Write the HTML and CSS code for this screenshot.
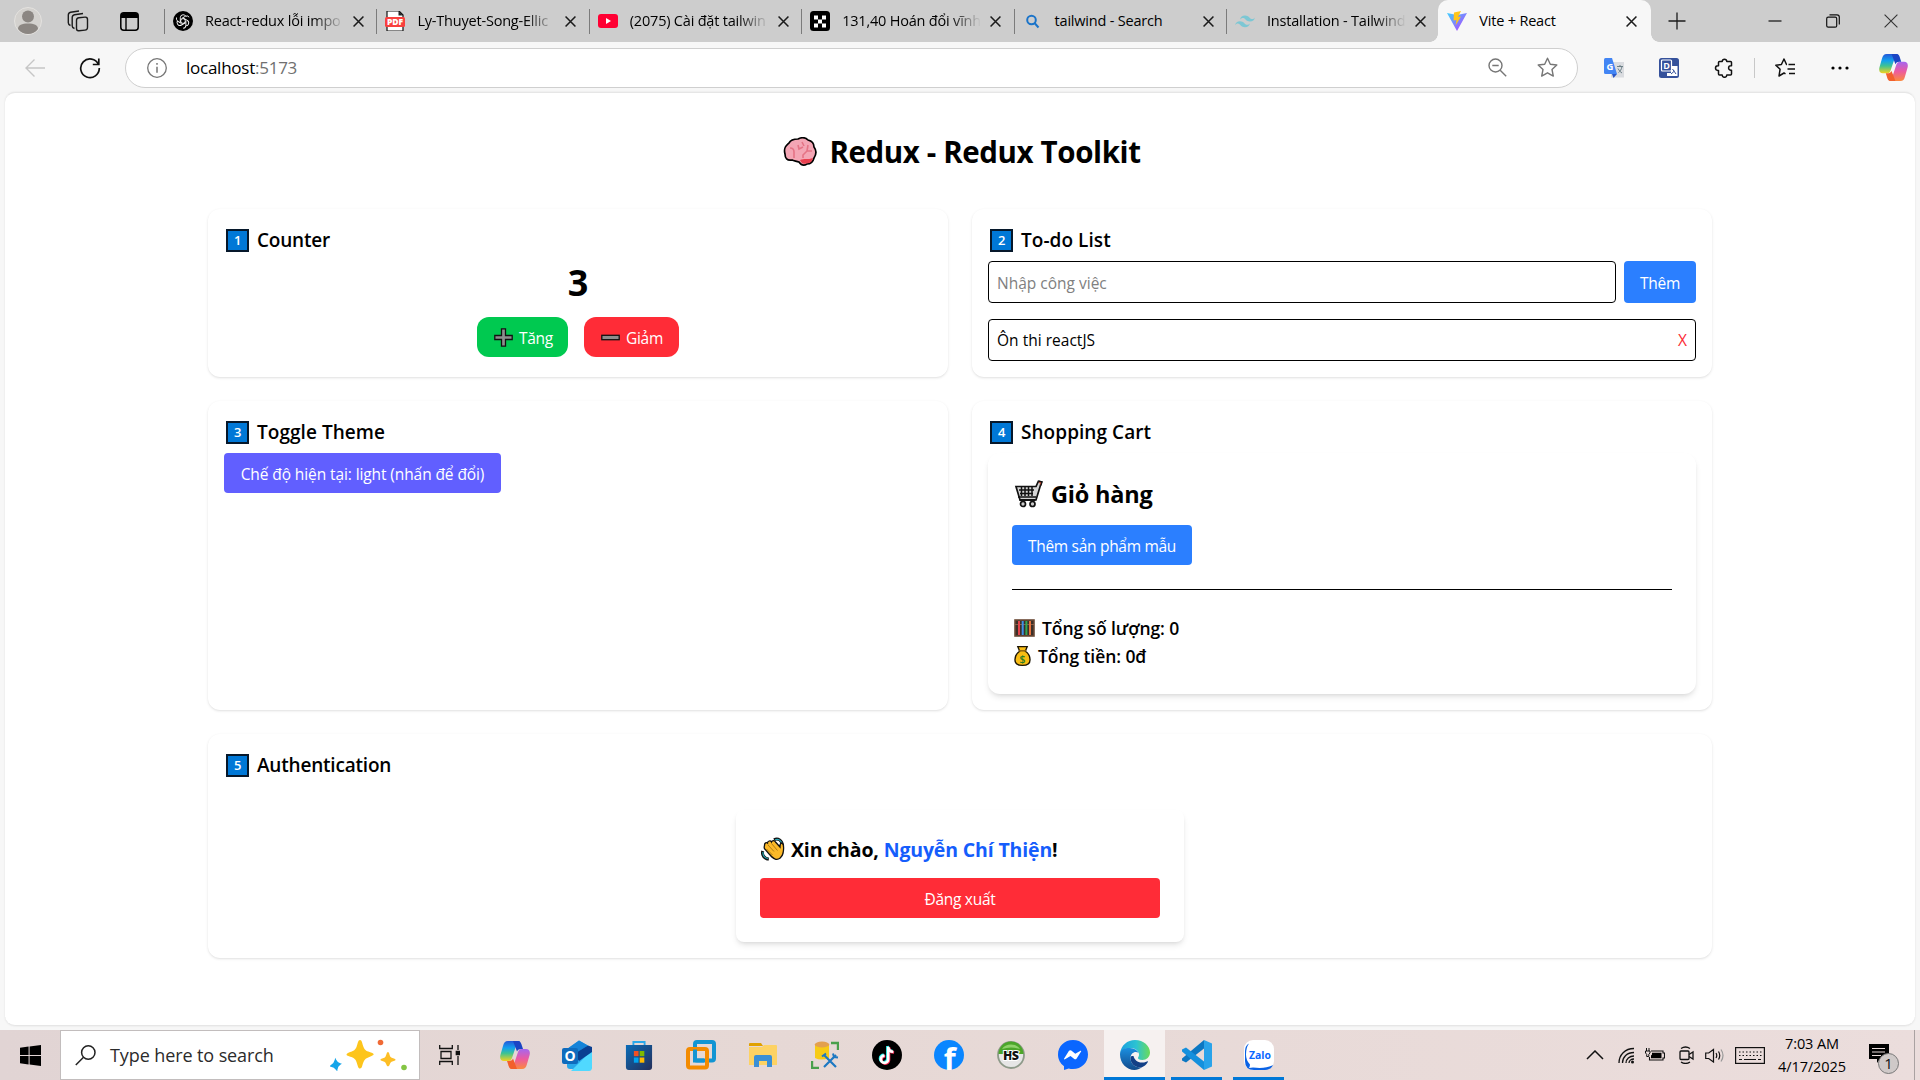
FILE: index.html
```html
<!DOCTYPE html>
<html lang="vi">
<head>
<meta charset="utf-8">
<title>Vite + React</title>
<link rel="stylesheet" href="styles.css">
</head>
<body>
<svg width="0" height="0" class="defs">
  <defs>
    <linearGradient id="cpA" x1="0" y1="0" x2="0" y2="1"><stop offset="0" stop-color="#2458d8"/><stop offset=".35" stop-color="#12a1ee"/><stop offset=".62" stop-color="#3fc391"/><stop offset="1" stop-color="#f4d21d"/></linearGradient>
    <linearGradient id="cpB" x1="0" y1="0" x2="0" y2="1"><stop offset="0" stop-color="#a566f0"/><stop offset=".5" stop-color="#ec5aa0"/><stop offset="1" stop-color="#fb8a3d"/></linearGradient>
    <linearGradient id="viteA" x1="0" y1="0" x2="1" y2="1"><stop offset="0" stop-color="#41d1ff"/><stop offset="1" stop-color="#bd34fe"/></linearGradient>
    <linearGradient id="edgeA" x1="0" y1="0" x2="1" y2="0"><stop offset="0" stop-color="#1a9fe0"/><stop offset=".55" stop-color="#2cc3d2"/><stop offset="1" stop-color="#6cdb58"/></linearGradient>
    <linearGradient id="edgeB" x1="0" y1="0" x2="0" y2="1"><stop offset="0" stop-color="#1b8fe0"/><stop offset="1" stop-color="#114a8b"/></linearGradient>
    <linearGradient id="storeA" x1="0" y1="0" x2="1" y2="1"><stop offset="0" stop-color="#0a6cb8"/><stop offset="1" stop-color="#252e58"/></linearGradient>
    <symbol id="close" viewBox="0 0 10 10"><path d="M.5.5l9 9M9.500.5l-9 9" stroke="#1b1b1b" stroke-width="1.400" fill="none"/></symbol>
    <symbol id="copilot" viewBox="0 0 30 28">
      <path d="M8 0h12l-3 2-5 15c-.7 2-1.700 3-4 3H4c-3 0-4.500-2-3.600-6L3 5c.9-3.400 2-5 5-5z" fill="url(#cpA)"/>
      <path d="M22 28H10l3-2 5-15c.7-2 1.700-3 4-3h4c3 0 4.500 2 3.600 6L27 23c-.9 3.400-2 5-5 5z" fill="url(#cpB)"/>
      <path d="M13 0h5c2.500 0 3.200 2 4 5l1 3h-2c-2 0-3 .7-4 2.500z" fill="#1b45c4"/>
      <path d="M17 28h-5c-2.500 0-3.200-2-4-5l-1-3h2c2 0 3-.7 4-2.500z" fill="#f2602c"/>
    </symbol>
  </defs>
</svg>

<header class="tabstrip">
  <div class="lead">
    <svg class="avatar" width="28" height="28" viewBox="0 0 28 28"><circle cx="14" cy="14" r="13.500" fill="#d3d1ce" stroke="#e4e2df"/><circle cx="14" cy="9.500" r="6" fill="#8b8682"/><path d="M4 22c0-4 4-5.500 10-5.500S24 18 24 22c-2.500 3.500-6 5-10 5S6.500 25.500 4 22z" fill="#8b8682"/></svg>
    <svg class="workspaces" width="22" height="22" viewBox="0 0 22 22" fill="none" stroke="#1b1b1b" stroke-width="1.400"><rect x="9.500" y="7" width="11" height="13" rx="2.500" transform="skewY(-6) translate(0 2)"/><path d="M7.500 18.500C5.800 18 5.200 17.300 5.200 16V7.500c0-1.500.8-2.500 2.300-2.800L16 3.500M3.500 15.500C2 15 1.300 14 1.300 12.800V5c0-1.500.8-2.500 2.300-2.800L12 1"/></svg>
    <svg class="vtabs" width="19" height="19" viewBox="0 0 19 19"><rect x=".8" y=".8" width="17.400" height="17.400" rx="3" fill="none" stroke="#000" stroke-width="1.500"/><path d="M1 6V3.500Q1 1 3.500 1h12Q18 1 18 3.500V6z"/><path d="M6 6v12" stroke="#000" stroke-width="1.400"/></svg>
  </div>
  <nav class="tabs">
    <div class="tab"><svg class="fav" viewBox="0 0 20 20"><circle cx="10" cy="10" r="10"/><g fill="none" stroke="#fff" stroke-width=".9"><path id="petal" d="M7.300 11.500V6.700q0-2.700 2.700-3 2.200 0 3 1.700M8.500 7.500l4-2.300q2.500-.9 3.700 1"/><use href="#petal" transform="rotate(120 10 10)"/><use href="#petal" transform="rotate(240 10 10)"/><path d="M10 7.500l2.200 1.200v2.600L10 12.500l-2.200-1.200V8.700z"/></g></svg><span class="label fade">React-redux lỗi impo</span><svg class="x"><use href="#close"/></svg></div>
    <div class="tab"><svg class="fav" viewBox="0 0 20 20"><path d="M2 0h12l4 4v16H2z" fill="#fff" stroke="#111" stroke-width="1.200"/><path d="M13.500 0v4.500H18" fill="#222"/><rect y="6" width="20" height="10" rx="1.500" fill="#f9403d"/><text x="10" y="14.300" font-size="8.500" font-weight="800" fill="#fff" text-anchor="middle" textLength="16">PDF</text></svg><span class="label fade">Ly-Thuyet-Song-Ellic</span><svg class="x"><use href="#close"/></svg></div>
    <div class="tab"><svg class="fav" viewBox="0 0 20 20"><rect y="3" width="20" height="14" rx="3" fill="#ff0033"/><path d="M8 7l5 3-5 3z" fill="#fff"/></svg><span class="label fade">(2075) Cài đặt tailwin</span><svg class="x"><use href="#close"/></svg></div>
    <div class="tab"><svg class="fav" viewBox="0 0 20 20"><rect width="20" height="20" rx="3.500"/><path d="M4 4.500h4v4H4zM12 4.500h4v4h-4zM8 8.500h4v4H8zM4 12.500h4v4H4zM12 12.500h4v4h-4z" fill="#fff"/></svg><span class="label fade">131,40 Hoán đổi vĩnh</span><svg class="x"><use href="#close"/></svg></div>
    <div class="tab"><svg class="fav" viewBox="0 0 20 20" fill="none" stroke="#1b74c9" stroke-width="2"><circle cx="8.500" cy="9" r="4.300"/><path d="M11.500 12l4 4.500"/></svg><span class="label">tailwind - Search</span><svg class="x"><use href="#close"/></svg></div>
    <div class="tab"><svg class="fav" viewBox="0 0 20 20"><path d="M5 8.500C5.700 5.800 7.300 4.500 10 4.500c4 0 4.500 3 6.500 3.500 1.300.3 2.500-.2 3.500-1.500-.7 2.700-2.300 4-5 4-4 0-4.500-3-6.500-3.500C7.200 6.700 6 7.200 5 8.500zM0 14.200c.7-2.700 2.300-4 5-4 4 0 4.500 3 6.500 3.500 1.300.3 2.500-.2 3.500-1.500-.7 2.700-2.300 4-5 4-4 0-4.500-3-6.500-3.500-1.300-.3-2.500.2-3.500 1.500z" fill="#7cc7d4"/></svg><span class="label fade">Installation - Tailwind</span><svg class="x"><use href="#close"/></svg></div>
    <div class="tab active"><svg class="fav" viewBox="0 0 20 20"><path d="M0 2l10 2 10-2-10 18z" fill="url(#viteA)"/><path d="M7 1.500l7-1.500-3 6 3-.5-5.500 9 1-5.500L6.500 9.500z" fill="#ffc61c"/></svg><span class="label">Vite + React</span><svg class="x"><use href="#close"/></svg></div>
  </nav>
  <svg class="newtab" width="18" height="18" viewBox="0 0 18 18"><path d="M9 .5v17M.5 9h17" stroke="#1b1b1b" stroke-width="1.300"/></svg>
  <div class="winctl">
    <svg width="14" height="14" viewBox="0 0 14 14"><path d="M.5 7h13" stroke="#111" stroke-width="1.200"/></svg>
    <svg width="14" height="14" viewBox="0 0 14 14" fill="none" stroke="#111" stroke-width="1.200"><rect x=".7" y="3.200" width="10" height="10" rx="1.500"/><path d="M3.500.8H11q2.300 0 2.300 2.300V10.500"/></svg>
    <svg width="14" height="14" viewBox="0 0 14 14"><path d="M.6.6l12.800 12.800M13.400.6L.6 13.400" stroke="#333" stroke-width="1.100"/></svg>
  </div>
</header>

<div class="toolbar">
  <svg class="back" width="20" height="18" viewBox="0 0 20 18" fill="none" stroke="#c6c6c6" stroke-width="1.400"><path d="M20 9H1M9.500.5L1 9l8.500 8.500"/></svg>
  <svg class="reload" width="22" height="22" viewBox="0 0 22 22" fill="none" stroke="#111" stroke-width="1.700"><path d="M19.500 7.500A9.300 9.300 0 1 0 20.300 11M19.800 1.500v6h-6"/></svg>
  <div class="omnibox">
    <svg width="20" height="20" viewBox="0 0 20 20" fill="none" stroke="#767676" stroke-width="1.300"><circle cx="10" cy="10" r="9.300"/><path d="M10 8.800v6M10 5v1.700" stroke-width="1.500"/></svg>
    <span class="url">localhost<i>:5173</i></span>
    <svg class="zoomout" width="19" height="19" viewBox="0 0 19 19" fill="none" stroke="#767676" stroke-width="1.400"><circle cx="7.500" cy="7.500" r="6.500"/><path d="M12.200 12.200l6 6M4.300 7.500h6.400"/></svg>
    <svg class="fave" width="21" height="21" viewBox="0 0 21 21" fill="none" stroke="#767676" stroke-width="1.400" stroke-linejoin="round"><path d="M10.500 1.200l2.800 6 6.500.8-4.800 4.500 1.300 6.600-5.800-3.300-5.800 3.300L6 12.500 1.200 8l6.500-.8z"/></svg>
  </div>
  <svg class="gtr" width="20" height="20" viewBox="0 0 20 20"><rect x="7" y="4" width="13" height="15.500" fill="#dadce0"/><path d="M0 1.500Q0 0 1.500 0H8l5 16H1.500Q0 16 0 14.500z" fill="#4285f4"/><path d="M8 16h5l-3.500 4z" fill="#2a56c6"/><path d="M13 8.500h6M16 7v1.500M18 8.500c-.5 3-2 5-3.500 6M14 10.500c1 2 2.500 3.500 4 4.500" stroke="#6b7f86" fill="none"/><text x="6" y="11.500" font-size="9.500" font-weight="700" fill="#fff" text-anchor="middle">G</text></svg>
  <svg class="dtr" width="20" height="20" viewBox="0 0 20 20"><rect width="20" height="20" rx="2.500" fill="#35519b"/><rect x="2.500" y="2" width="10" height="11" rx="1" fill="none" stroke="#fff" stroke-width="1.200"/><text x="7.500" y="11" font-size="9" font-weight="700" fill="#fff" text-anchor="middle">D</text><path d="M12 8h6.500v10H8v-3h4z" fill="#fff"/><path d="M13.500 11l3.500 5M12 16l3.500-3" stroke="#35519b"/></svg>
  <svg class="ext" width="20" height="20" viewBox="0 0 20 20" fill="none" stroke="#111" stroke-width="1.500" stroke-linejoin="round"><path d="M5.500 3.500h2.700a2.300 2.300 0 0 1 4.600 0H16.500q1 0 1 1v3.300h-.7a2.200 2.200 0 0 0 0 4.400h.7V16q0 1-1 1h-3.700a2.300 2.300 0 0 1-4.600 0H5.500q-1 0-1-1v-3.600h-.7a2.300 2.300 0 0 1 0-4.600h.7V4.500q0-1 1-1z"/></svg>
  <span class="vline"></span>
  <svg class="favs" width="21" height="20" viewBox="0 0 21 20" fill="none" stroke="#111" stroke-width="1.500" stroke-linejoin="round"><path d="M12 6.500h-.5L9 1 6.400 6.500.8 7.200l4.300 4L4 18l5-3 1.500.8M13.500 6.500H20M12.500 11H20M14 15.500h6"/></svg>
  <svg class="more" width="18" height="4" viewBox="0 0 18 4"><circle cx="2" cy="2" r="1.600"/><circle cx="9" cy="2" r="1.600"/><circle cx="16" cy="2" r="1.600"/></svg>
  <svg class="cop" width="29" height="27"><use href="#copilot"/></svg>
</div>

<main class="viewport">
  <h1 class="title"><svg width="34" height="30" viewBox="0 0 34 30"><path d="M2 17C0 10 4 8 6 6c2-4 7-4 9-4 4-2 8-1 10 1 4 1 6 4 6 7 3 4 2 8 0 11-1 4-3 6-7 6-3 2-6 1-8-2-3-1-5-1-7-2-5 1-7-2-7-6z" fill="#f4a6b5" stroke="#000" stroke-width="1.700"/><path d="M17 23c4-2 8 0 13-2-1 4-3 5.500-6.500 5.200-3 1.300-5 .3-6.500-3.200z" fill="#e8404f"/><path d="M7 11c2 0 4 1 4 4M11 15v6M15 8l1 4 4-2M19 5l2 4M25 8l-1 6h5M24 14l-4 4v3" fill="none" stroke="#e57486" stroke-width="1.600"/></svg><span>Redux - Redux Toolkit</span></h1>

  <div class="grid">
    <section class="card">
      <h2><b class="key">1</b><span>Counter</span></h2>
      <p class="count">3</p>
      <div class="row">
        <button class="btn green"><svg width="19" height="19" viewBox="0 0 19 19"><path d="M7.500.8h4v6.700h6.700v4h-6.700v6.700h-4v-6.700H.8v-4h6.700z" fill="#8d8d8d" stroke="#111" stroke-width="1.300"/></svg><span>Tăng</span></button>
        <button class="btn red"><svg width="19" height="19" viewBox="0 0 19 19"><rect x=".8" y="7.300" width="17.400" height="4.400" fill="#8d8d8d" stroke="#111" stroke-width="1.300"/></svg><span>Giảm</span></button>
      </div>
    </section>

    <section class="card">
      <h2><b class="key">2</b><span class="loose">To-do List</span></h2>
      <div class="form"><input class="field" type="text" placeholder="Nhập công việc"><button class="btn blue">Thêm</button></div>
      <div class="item"><span>Ôn thi reactJS</span><span class="del">X</span></div>
    </section>

    <section class="card">
      <h2><b class="key">3</b><span class="loose">Toggle Theme</span></h2>
      <button class="btn indigo">Chế độ hiện tại: light (nhấn để đổi)</button>
    </section>

    <section class="card">
      <h2><b class="key">4</b><span class="loose">Shopping Cart</span></h2>
      <div class="cart">
        <h3><svg width="29" height="28" viewBox="0 0 29 28" stroke="#111" fill="none"><path d="M2 6.500h20l2.300-5 3.200.5-5.500 18H6z" fill="#d5d5d5" stroke-width="1.700"/><path d="M24.300 1l3.700 1-1.200 3.500" fill="#e8583b" stroke-width="1.400"/><path d="M5 10h15M6 13.500h13M7.500 7v9M11 7v9M14.500 7v9M18 7v9M4 17h18" stroke-width="1.500"/><path d="M5.500 20h16" stroke-width="2"/><circle cx="9" cy="24" r="2.500" fill="#ccc" stroke-width="1.700"/><circle cx="18.500" cy="24" r="2.500" fill="#ccc" stroke-width="1.700"/></svg><span>Giỏ hàng</span></h3>
        <button class="btn blue">Thêm sản phẩm mẫu</button>
        <hr>
        <p class="sum"><svg width="21" height="18" viewBox="0 0 21 18"><rect x="1" y="1" width="19" height="16" fill="#3b3029" stroke="#6b4a36" stroke-width="1.600"/><path d="M1 5.500h19" stroke="#8a6048"/><path d="M5 2v14" stroke="#e3434a" stroke-width="2"/><path d="M8.700 2v14" stroke="#3f90e8" stroke-width="2"/><path d="M12.400 2v14" stroke="#33a852" stroke-width="2"/><path d="M16 2v14" stroke="#e8703b" stroke-width="2"/></svg><span>Tổng số lượng: 0</span></p>
        <p class="sum money"><svg width="17" height="22" viewBox="0 0 18 22"><path d="M4 1h10l-2 5c3 2 5 5 5 9 0 4-3 6-8 6s-8-2-8-6c0-4 2-7 5-9z" fill="#f9bd14" stroke="#1c1503" stroke-width="1.400"/><path d="M5 5.500h8" stroke="#8e6410" stroke-width="1.600"/><text x="9" y="18" font-size="11" fill="#2b7d24" font-weight="600" text-anchor="middle">$</text></svg><span>Tổng tiền: 0đ</span></p>
      </div>
    </section>

    <section class="card wide">
      <h2><b class="key">5</b><span>Authentication</span></h2>
      <div class="auth">
        <h4><svg width="24" height="24" viewBox="0 0 24 24"><path d="M13 2.800c4-2.300 8 .5 8.700 6M1.800 14c-1.300 4 1.700 8 6 8" fill="none" stroke="#111" stroke-width="3"/><path d="M14 2.800c3.500-1.500 6.500.7 7.300 5M2 15c-.5 3.500 1.700 6 5 6.500" fill="none" stroke="#27a6b3" stroke-width="1.200"/><path d="M3.500 8c0-2 2-3 3-2 0-2 3-3 4-1 1-2 3-1.500 4 0l4.500 5c0-2 0-4 1.800-4 2 1 2 6 1.300 10-1 4.500-4.300 6.800-7.300 6.300-3-.5-5-3-11-10.300-1.500-2 0-3-.3-4z" fill="#fcb928" stroke="#111" stroke-width="1.300"/><path d="M7 8l6 6.500M10.500 6.500l6 7M5.500 12l6 6" stroke="#8c6111" stroke-width=".7"/></svg><span class="hello">Xin chào, <em>Nguyễn Chí Thiện</em>!</span></h4>
        <button class="btn red">Đăng xuất</button>
      </div>
    </section>
  </div>
</main>

<footer class="taskbar">
  <div class="start"><svg width="21" height="21" viewBox="0 0 21 21"><path d="M0 2.800l8.600-1.200v8.500H0zM9.600 1.400L21 0v10.100H9.600zM0 11.100h8.600v8.400L0 18.300zM9.600 11.100H21V21L9.600 19.600z"/></svg></div>
  <div class="search">
    <svg width="21" height="21" viewBox="0 0 21 21" fill="none" stroke="#222" stroke-width="1.500"><circle cx="13.300" cy="7.500" r="6.700"/><path d="M8.500 12.300L.8 20"/></svg>
    <span>Type here to search</span>
    <svg class="sparks" width="78" height="32" viewBox="0 0 78 32"><path d="M30 1c2 0 2 3 3.500 7S37 12 41 13.500s3 2.500 0 3.800-6 2-7.500 5.700S32 29.500 30 29.500s-2-2.500-3.500-6.500-4-4.500-7.500-5.700-3-2.500 0-3.800 6-1.500 7.500-5.500S28 1 30 1z" fill="#fdc51c"/><path d="M58 13c1.500 0 1.300 4 3 5.300s4.500 1 4.500 2.500-3 1-4.500 2.500-1.300 4-3 4-1.500-2.700-3-4-4.500-1-4.500-2.500 3-1 4.500-2.500 1.500-5.300 3-5.300z" fill="#fdbe25"/><path d="M5.500 21c1 2 1.500 3 4.500 4-2.500 1.300-3 2.300-3.300 5.500-1.500-2-2.400-3-5.700-3.500C4 25.300 4.800 24.300 5.500 21z" fill="#14a5e9" stroke="#14a5e9" stroke-width="1.500"/><circle cx="50.500" cy="3.500" r="2.800" fill="#f06a35"/><circle cx="74" cy="28.500" r="2.800" fill="#84c544"/></svg>
  </div>
  <div class="apps">
    <div class="app view"><svg width="21" height="20" viewBox="0 0 21 20" fill="none" stroke="#111" stroke-width="1.300"><path d="M.7 0v3.500h12.600V0M.7 20v-3.500h12.600V20M2 6.500h10v7H2zM19 0v5M19 11v9"/><path d="M17.300 6.500h3.400v3h-3.400z" fill="#111"/></svg></div>
    <div class="app"><svg width="30" height="28"><use href="#copilot"/></svg></div>
    <div class="app"><svg width="30" height="31" viewBox="0 -2 30 31"><path d="M5 7L17-1.500 30 6v19q0 2-2 2H8q-3 0-3-3z" fill="#28a8ea"/><path d="M5 7L17-1.500l9 5L12 12z" fill="#1583d8"/><path d="M30 8v17q0 4-3 4H9z" fill="#50d9ff"/><path d="M30 5v5l-13 9-5-7L26 3.500z" fill="#0a3f91"/><rect y="6" width="16" height="16" rx="2" fill="#0f6cbd"/><text x="8" y="19" font-size="14" font-weight="700" fill="#fff" text-anchor="middle">O</text></svg></div>
    <div class="app"><svg width="28" height="30" viewBox="0 0 30 30" preserveAspectRatio="none"><path d="M9 6V2h12v4" fill="none" stroke="#29a8ea" stroke-width="2"/><path d="M1 5h28v22q0 3-3 3H4q-3 0-3-3z" fill="url(#storeA)"/><path d="M9.500 11h5v5.200h-5z" fill="#f25022"/><path d="M15.700 11h5v5.200h-5z" fill="#7fba00"/><path d="M9.500 17.500h5v5.200h-5z" fill="#00a4ef"/><path d="M15.700 17.500h5v5.200h-5z" fill="#ffb900"/></svg></div>
    <div class="app"><svg width="30" height="30" viewBox="0 0 30 30" fill="none" stroke-width="4"><rect x="9" y="2" width="19" height="18.500" rx="2" stroke="#1295d3"/><rect x="2" y="9" width="19" height="18.500" rx="2" stroke="#f38b00"/><path d="M9 9.500v11h9" stroke="#1295d3"/></svg></div>
    <div class="app"><svg width="28" height="24" viewBox="0 0 28 24"><path d="M0 1q0-1 1-1h11l2 3H0z" fill="#e0a100"/><path d="M0 4h13l2-2h12q1 0 1 1v19H0z" fill="#fdd263"/><path d="M5 24V14q0-2 2-2h14q2 0 2 2v10h-5v-6h-8v6z" fill="#3a8fd6"/></svg></div>
    <div class="app"><svg width="28" height="28" viewBox="0 0 28 28"><path d="M4 3v14q6 3 14 0V3z" fill="#f7cb15"/><ellipse cx="11" cy="3.500" rx="7.200" ry="3" fill="#e3a04e"/><path d="M20 2h7v7M1 20v7h7" fill="none" stroke="#4aa04c" stroke-width="2.400"/><path d="M13 14l12 12M25 14L13 26" stroke="#1d78c2" stroke-width="2.200"/><path d="M11 15.500l4-3M22 12.500l1 3.500 4 .5" stroke="#1d78c2" stroke-width="2" fill="none"/></svg></div>
    <div class="app"><svg width="30" height="30" viewBox="0 0 30 30"><circle cx="15" cy="15" r="15"/><g fill="none" stroke-width="2.600"><path d="M15.400 6v12.500a3.700 3.700 0 1 1-3.700-3.700M15.400 6c.3 3 2.300 4.800 5.100 5" stroke="#25f4ee"/><path d="M17 7.500V20a3.700 3.700 0 1 1-3.700-3.700M17 7.500c.3 3 2.300 4.800 5.100 5" stroke="#fe2c55"/><path d="M16.200 6.800v12.500a3.700 3.700 0 1 1-3.700-3.700M16.200 6.800c.3 3 2.300 4.800 5.100 5" stroke="#fff"/></g></svg></div>
    <div class="app"><svg width="30" height="30" viewBox="0 0 30 30"><circle cx="15" cy="15" r="15" fill="#0a86ff"/><text x="15.800" y="29.500" font-size="31" font-weight="700" fill="#fff" text-anchor="middle">f</text></svg></div>
    <div class="app"><svg width="28" height="28" viewBox="0 0 28 28"><circle cx="14" cy="14" r="13" fill="#e6e6e6" stroke="#8e9a8a" stroke-width="1.800"/><path d="M1.500 13a12.500 12.500 0 0 1 25 0z" fill="#4ba62a"/><path d="M5 8a10 8 0 0 1 18 0q-9-3-18 0z" fill="#8fd26a"/><text x="14" y="18.500" font-size="12.500" font-weight="800" fill="#111" stroke="#fff" stroke-width="2" paint-order="stroke" text-anchor="middle" textLength="16">HS</text></svg></div>
    <div class="app"><svg width="30" height="30" viewBox="0 0 30 30"><path d="M15 0c8.500 0 15 6.200 15 14.500S23.500 29 15 29c-1.500 0-3-.2-4.300-.6L6 30v-3.800C2.300 23.500 0 19.300 0 14.500 0 6.200 6.500 0 15 0z" fill="#0a66ff"/><path d="M6 18.800l5-8q1-1 2.300-.3l4 3.200 5.200-3q1-.3.600.7l-4.600 7.300q-1 1-2.200.3l-3.800-3-5.500 3.300q-1 .4-1-.5z" fill="#fff"/></svg></div>
    <div class="app current"><svg width="30" height="30" viewBox="0 0 30 30"><path d="M0 14C1 5 7.500 0 15 0c8.500 0 15 6 15 12.500 0 4.500-3.500 7.500-7.500 7.500-3.500 0-4.800-1.200-4.500-2.200.3-.8 1-1.300 1-3.300C19 11 15.500 8 10.500 8 5 8 1 11 0 14z" fill="url(#edgeA)"/><path d="M0 14.500C0 9.500 5 7.500 10 8c4 .3 7.500 2 8.700 5-3-2.500-8.200-.5-8.200 5 0 6 5 10 11 9.500-2 1.600-4.300 2.500-7 2.500C6.500 30 0 23 0 14.500z" fill="url(#edgeB)"/><path d="M10.500 18c0 6 5 10 11 9.500 2.500-1 4.800-3 6.200-5.300.5-.9 0-1.200-.8-.8-7 3-12 0-13.400-5.400-2 0-3 0-3 2z" fill="#123f86"/></svg></div>
    <div class="app open"><svg width="30" height="30" viewBox="0 0 30 30"><path d="M22 0l8 3.500v23L22 30z" fill="#29a3ea"/><path d="M22 0v8.500L4 22.500 0 20.500v-2z" fill="#0c77c2"/><path d="M22 30v-8.500L4 7.500 0 9.500v2z" fill="#1490dd"/></svg></div>
    <div class="app open"><svg width="30" height="30" viewBox="0 0 30 30"><rect width="30" height="30" rx="9" fill="#fff"/><path d="M1 10v11q0 9 9 9h11q6 0 8-5-7 4-20 2.500l-4 .5q1-2 1-3.500-4-4-4-10 0-7 3-11-4 2-4 7.500z" fill="#0b63e5"/><text x="16" y="18.500" font-size="11" font-weight="700" fill="#0b68ff" text-anchor="middle" textLength="22" lengthAdjust="spacingAndGlyphs">Zalo</text></svg></div>
  </div>
  <div class="tray">
    <svg width="18" height="10" viewBox="0 0 18 10" fill="none" stroke="#111" stroke-width="1.500"><path d="M1 9l8-8 8 8"/></svg>
    <svg class="wifi" width="17" height="17" viewBox="0 0 17 17" fill="none" stroke="#111" stroke-width="1.300"><path d="M1 16C1 8 7 1.500 16 1.500M4.500 16C4.500 10 9 5.500 16 5.500M8 16c0-4 3.500-7 8-7M11 16c0-2 2-4 5-4"/><circle cx="14.500" cy="15" r="1.500" fill="#111" stroke="none"/></svg>
    <svg class="batt" width="20" height="14" viewBox="0 0 20 14"><path d="M6 3h12v2h1.500v5H18v2H4.500V9" fill="none" stroke="#111" stroke-width="1.100"/><path d="M7 4.800h9.500v5.500H6V7.500l1-1z"/><path d="M1.500 0v3M4 0v3M.5 3h4.500v2L3.800 6.300V8.500H1.700V6.300L.5 5z" fill="none" stroke="#111" stroke-width="1"/></svg>
    <svg class="cam" width="15" height="18" viewBox="0 0 15 18" fill="none" stroke="#111" stroke-width="1.300"><rect x="1" y="5" width="9" height="8.500" rx="1"/><path d="M10 8.500L14 6v7l-4-2.500M2 2.500Q6.500-.5 11 2.500M2 16Q6.500 19 11 16"/></svg>
    <svg class="vol" width="20" height="15" viewBox="0 0 20 15" fill="none" stroke="#111" stroke-width="1.200"><path d="M.7 5v5.500h3L8.500 14V1.500L3.700 5zM11 5q1.500 2.500 0 5M13.500 3.500q2.500 4 0 8"/><path d="M16 1.500q4 6 0 12" stroke="#999"/></svg>
    <svg class="kbd" width="30" height="17" viewBox="0 0 30 17" fill="none" stroke="#111" stroke-width="1.200"><rect x=".6" y=".6" width="28.800" height="15.800"/><path d="M4 5h23M4 8.500h23" stroke-dasharray="1.500 2"/><path d="M4 12.500h3M9 12.500h12M23 12.500h3"/></svg>
    <div class="clock"><span>7:03 AM</span><span>4/17/2025</span></div>
    <svg class="note" width="32" height="31" viewBox="0 0 32 31"><path d="M1 1h20v15H12l-3 4v-4H1z"/><path d="M4 5.500h13M4 9h13M4 12.500h9" stroke="#e8dad9" stroke-width="1.200"/><circle cx="20.500" cy="20.500" r="10" fill="#cfc9c8" stroke="#777"/><text x="20.500" y="26" font-size="15" text-anchor="middle" fill="#111">1</text></svg>
    <span class="desk"></span>
  </div>
</footer>
</body>
</html>
```
FILE: styles.css
```css
* { box-sizing: border-box; margin: 0; padding: 0; }
body {
  width: 1920px; height: 1080px; overflow: hidden;
  display: flex; flex-direction: column;
  font-family: "Open Sans", "Noto Sans", sans-serif;
  background: #f7f7f7; color: #000;
}
svg { display: block; flex: none; }
.defs { position: absolute; }

/* tab strip */
.tabstrip { height: 42px; flex: none; background: #cdcdcd; display: flex; align-items: center; }
.lead { width: 164px; flex: none; display: flex; align-items: center; padding-left: 14px; }
.workspaces { margin-left: 25px; }
.vtabs { margin-left: 31px; }
.tabs { display: flex; flex: none; height: 42px; }
.tab { width: 212.4px; display: flex; align-items: center; padding-left: 9px; background: linear-gradient(#7b7b7b, #7b7b7b) 0 9px / 1px 25px no-repeat; }
.tab.active { background: #f7f7f7; border-radius: 10px 10px 0 0; position: relative; }
.tab.active::before, .tab.active::after { content: ""; position: absolute; bottom: 0; width: 8px; height: 8px; }
.tab.active::before { left: -8px; background: radial-gradient(circle at 0 0, #cdcdcd 7.500px, #f7f7f7 8px); }
.tab.active::after { right: -8px; background: radial-gradient(circle at 100% 0, #cdcdcd 7.500px, #f7f7f7 8px); }
.fav { width: 20px; height: 20px; }
.label { width: 148px; margin-left: 12px; font-size: 14.500px; letter-spacing: -.2px; line-height: 20px; white-space: nowrap; }
.fade { -webkit-mask-image: linear-gradient(90deg, #000 108px, transparent 139px); mask-image: linear-gradient(90deg, #000 108px, transparent 139px); }
.x { width: 11px; height: 11px; }
.tab.active .x { margin-left: -1px; }
.newtab { margin-left: 17px; }
.winctl { display: flex; gap: 44px; margin-left: auto; margin-right: 22px; }

/* toolbar */
.toolbar { height: 51px; flex: none; display: flex; align-items: center; padding-left: 25px; }
.reload { margin-left: 34px; }
.omnibox { width: 1453px; height: 40px; flex: none; margin-left: 24px; padding: 0 19px 0 21px; display: flex; align-items: center; border: 1px solid #cfcfcf; border-radius: 20px; background: #fff; }
.url { margin-left: 19px; font-size: 17px; letter-spacing: -.25px; }
.url i { font-style: normal; color: #707070; }
.zoomout { margin-left: auto; }
.fave { margin-left: 30px; }
.gtr { margin-left: 26px; }
.dtr { margin-left: 35px; }
.ext { margin-left: 35px; }
.vline { width: 1px; height: 20px; margin-left: 20px; background: #c8c8c8; }
.favs { margin-left: 20px; }
.more { margin-left: 35px; }
.cop { margin-left: 30px; }

/* page */
.viewport { height: 934px; flex: none; margin: -1px 5px 0; padding: 41px 203px 0; background: #fff; border: 1px solid #e6e6e6; border-width: 1px 0; border-radius: 10px; box-shadow: 0 0 2px #ddd; }
.title { display: flex; align-items: center; justify-content: center; gap: 12px; height: 36px; padding-left: 4px; font-size: 29.500px; font-weight: 700; line-height: 36px; letter-spacing: -.38px; }
.grid { display: grid; grid-template-columns: 1fr 1fr; grid-template-rows: 168px 309px 224px; gap: 24px; margin-top: 39px; }
.card { padding: 16px; border-radius: 12px; background: #fff; box-shadow: 0 1px 3px rgba(0,0,0,.1), 0 1px 2px -1px rgba(0,0,0,.1); }
.wide { grid-column: span 2; }
h2 { display: flex; align-items: center; height: 28px; margin-bottom: 8px; padding: 2px 0 0 2px; font-size: 19px; font-weight: 600; letter-spacing: -.2px; }
h2 span { margin-left: 8px; }
h2 .loose { letter-spacing: .05px; }
.key { width: 23px; height: 23px; border: 2px solid #06182b; background: #0078d7; color: #fff; font-size: 13px; font-weight: 600; line-height: 19px; text-align: center; }
.count { height: 40px; margin-bottom: 16px; font-size: 36px; font-weight: 700; line-height: 44px; text-align: center; }
.row { display: flex; justify-content: center; gap: 16px; }
.btn { height: 40px; padding: 1px 16px 0; border: 0; border-radius: 4px; color: #fff; font: 400 15.500px/24px "Open Sans", "Noto Sans", sans-serif; letter-spacing: -.3px; white-space: nowrap; }
.row .btn { display: flex; align-items: center; gap: 6px; padding: 1px 15px 0 17px; border-radius: 12px; }
.row .green { width: 91px; }
.row .red { width: 95px; }
.green { background: #00c950; }
.red { background: #ff2c37; }
.blue { background: #2b7fff; }
.indigo { width: 277px; background: #615fff; letter-spacing: -.1px; }
.form { display: flex; gap: 8px; }
.form .btn { width: 72px; height: 42px; }
.field { flex: 1; height: 42px; padding: 1px 8px 0; border: 1px solid #000; border-radius: 4px; font: 400 15.500px "Open Sans", "Noto Sans", sans-serif; letter-spacing: 0; background: #fff; }
.field::placeholder { color: #808080; }
.item { display: flex; justify-content: space-between; align-items: center; height: 42px; margin-top: 16px; padding: 0 8px; border: 1px solid #000; border-radius: 4px; font-size: 15.500px; letter-spacing: .02px; }
.del { color: #fb2c36; }
.cart { height: 241px; padding: 24px; border-radius: 12px; background: #fff; box-shadow: 0 4px 6px -1px rgba(0,0,0,.1), 0 2px 4px -2px rgba(0,0,0,.1); }
h3 { display: flex; align-items: center; gap: 8px; height: 32px; margin-bottom: 16px; padding: 2px 0 0 2px; font-size: 23.500px; font-weight: 700; letter-spacing: -.2px; }
.cart .btn { width: 180px; display: block; }
hr { border: 0; border-top: 1px solid #000; margin: 24px 0; }
.sum { display: flex; align-items: center; gap: 7px; height: 28px; padding-left: 2px; font-size: 17.500px; font-weight: 600; letter-spacing: -.08px; }
.auth { width: 448px; height: 132px; margin: 32px auto 0; padding: 24px; border-radius: 8px; background: #fff; box-shadow: 0 4px 6px -1px rgba(0,0,0,.1), 0 2px 4px -2px rgba(0,0,0,.1); }
h4 { display: flex; align-items: center; gap: 6px; height: 28px; margin-bottom: 16px; padding: 2px 0 0 1px; font-size: 19.500px; font-weight: 700; letter-spacing: -.15px; }
h4 em { font-style: normal; color: #155dfc; }
.auth .btn { width: 400px; }

/* taskbar */
.taskbar { height: 50px; flex: none; margin-top: 4px; display: flex; background: linear-gradient(90deg, #e1d4d4, #e6d8d5 40%, #ebdddc); }
.start { width: 60px; display: flex; align-items: center; justify-content: center; }
.search { width: 360px; display: flex; align-items: center; padding-left: 14px; border: 1px solid #c2bdbd; background: #fff; }
.search span { margin-left: 14px; font-size: 18px; letter-spacing: -.1px; color: #2b2b2b; }
.sparks { margin-left: auto; margin-right: 11px; }
.apps { display: flex; }
.app { width: 62px; height: 50px; display: flex; align-items: center; justify-content: center; }
.app.view { width: 64px; padding-right: 5px; }
.app.current { background: linear-gradient(#0078d7, #0078d7) 0 47px / 61px 3px no-repeat, linear-gradient(#f6f1f0, #f6f1f0) 0 0 / 61px 50px no-repeat; }
.app.open { background: linear-gradient(#0078d7, #0078d7) 5px 47px / 51px 3px no-repeat; }
.tray { display: flex; align-items: center; margin-left: auto; }
.wifi { margin-left: 14px; }
.batt { margin-left: 10px; }
.cam { margin-left: 14px; }
.vol { margin-left: 11px; }
.kbd { margin-left: 10px; }
.clock { width: 94px; display: flex; flex-direction: column; align-items: center; font-size: 14.500px; line-height: 23px; letter-spacing: -.1px; }
.note { margin-left: 9px; margin-top: 7px; }
.desk { width: 1px; height: 50px; margin: 0 5px 0 14px; background: #aaa2a2; }
```
